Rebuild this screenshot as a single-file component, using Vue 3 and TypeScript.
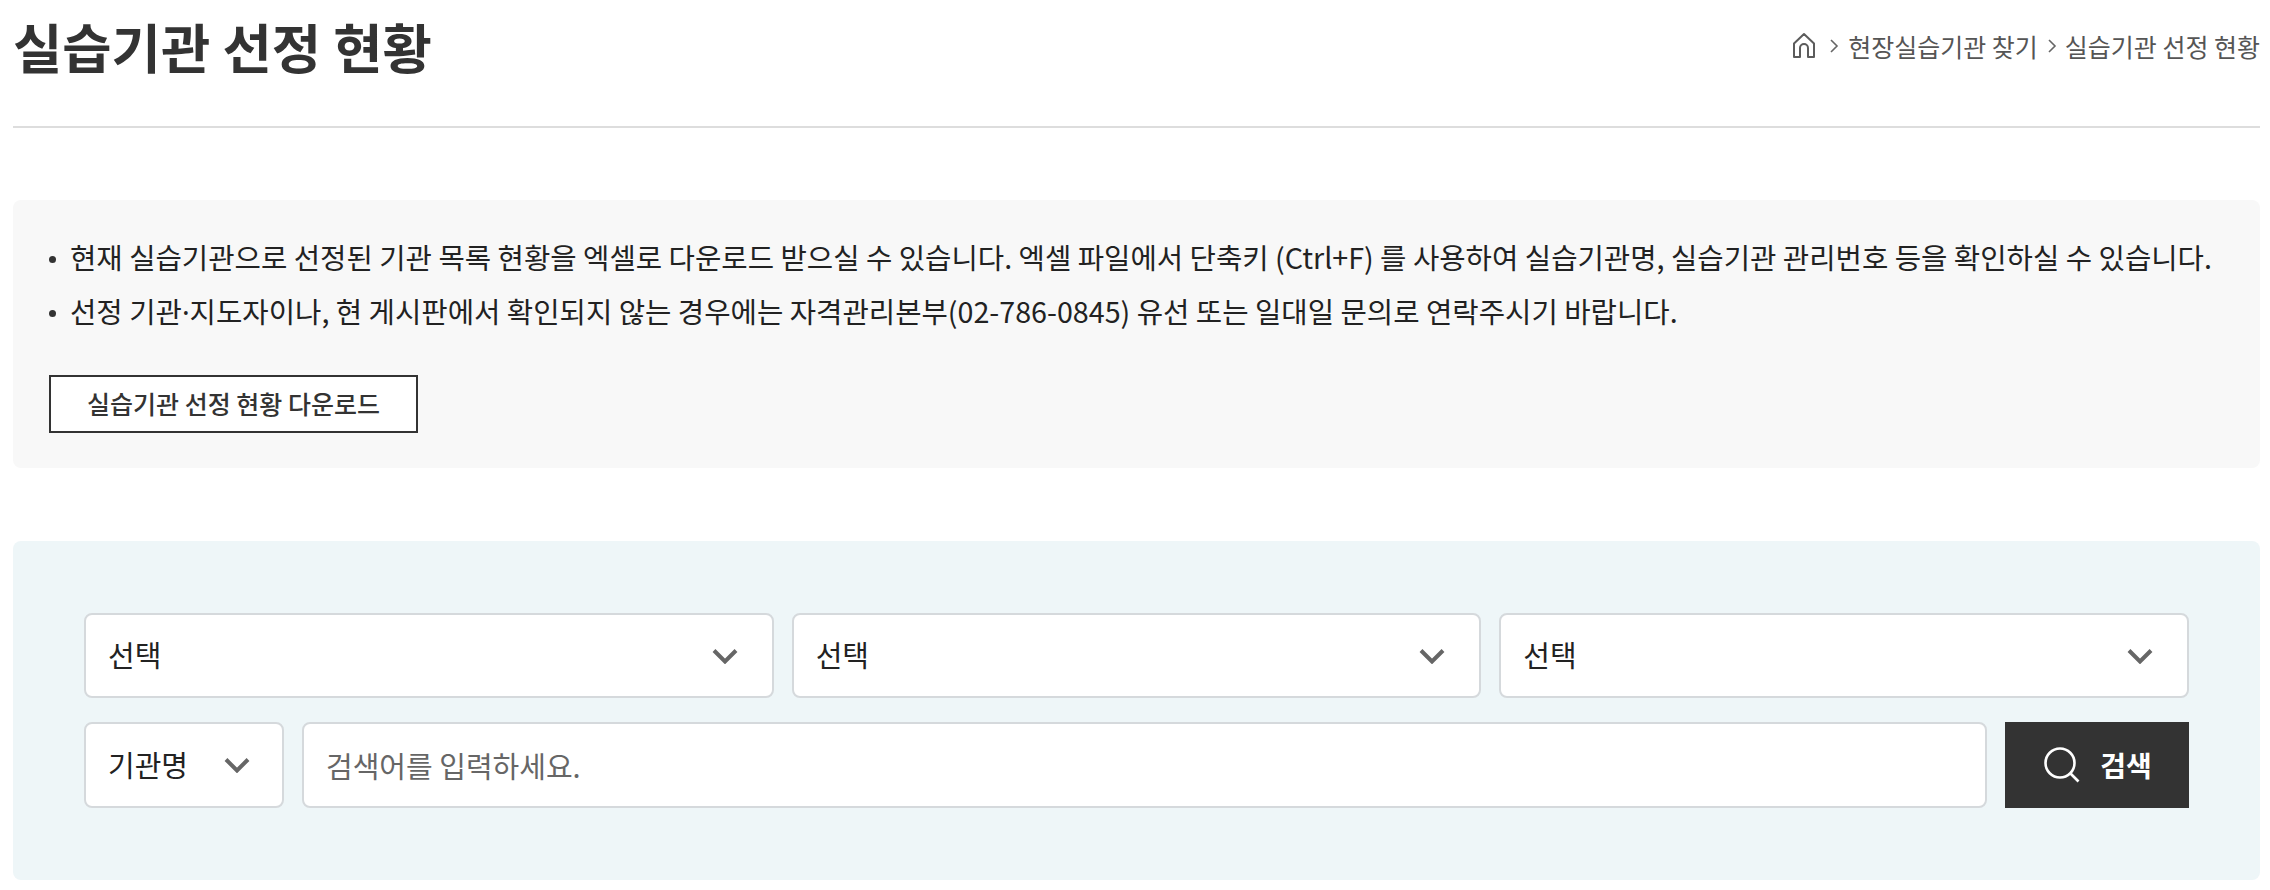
<script setup lang="ts">
const selects = ['선택', '선택', '선택']
</script>

<template>
  <div class="page">
    <header class="head">
      <h1>실습기관 선정 현황</h1>
      <nav class="crumbs">
        <svg class="home" width="24" height="27" viewBox="0 0 24 27" fill="none" stroke="#5c5c5c" stroke-width="2" stroke-linejoin="round">
          <path d="M2 11.500 12 2l10 9.500V25H16V16a4 4 0 0 0-8 0V25H2Z" />
        </svg>
        <svg class="sep first" width="10" height="16" viewBox="0 0 10 16" fill="none" stroke="#666" stroke-width="1.6"><path d="m2 2 6 6-6 6" /></svg>
        <span>현장실습기관 찾기</span>
        <svg class="sep" width="10" height="16" viewBox="0 0 10 16" fill="none" stroke="#666" stroke-width="1.6"><path d="m2 2 6 6-6 6" /></svg>
        <span>실습기관 선정 현황</span>
      </nav>
    </header>

    <section class="notice">
      <ul>
        <li>현재 실습기관으로 선정된 기관 목록 현황을 엑셀로 다운로드 받으실 수 있습니다. 엑셀 파일에서 단축키 (Ctrl+F) 를 사용하여 실습기관명, 실습기관 관리번호 등을 확인하실 수 있습니다.</li>
        <li>선정 기관<span class="dot">·</span>지도자이나, 현 게시판에서 확인되지 않는 경우에는 자격관리본부(02-786-0845) 유선 또는 일대일 문의로 연락주시기 바랍니다.</li>
      </ul>
      <button class="download"><span>실습기관 선정 현황 다운로드</span></button>
    </section>

    <section class="search">
      <div class="row selects">
        <div v-for="(label, i) in selects" :key="i" class="select">
          <span>{{ label }}</span>
          <svg width="26" height="16" viewBox="0 0 26 16" fill="none" stroke="#666" stroke-width="4"><path d="m2 2.500 11 11 11-11" /></svg>
        </div>
      </div>
      <div class="row lower">
        <div class="select kind">
          <span>기관명</span>
          <svg width="26" height="16" viewBox="0 0 26 16" fill="none" stroke="#666" stroke-width="4"><path d="m2 2.500 11 11 11-11" /></svg>
        </div>
        <input class="keyword" type="text" placeholder="검색어를 입력하세요." />
        <button class="submit">
          <svg width="38" height="38" viewBox="0 0 38 38" fill="none" stroke="#fff" stroke-width="2.600"><circle cx="17" cy="17" r="14.500" /><path d="m27.500 27.500 8 8" /></svg>
          <span>검색</span>
        </button>
      </div>
    </section>
  </div>
</template>

<style>
body {
  background: #fff;
}
</style>

<style scoped>
.page {
  padding: 0 10px 0 13px;
  font-family: "Noto Sans CJK KR", "Noto Sans", sans-serif;
  color: #333;
}

.head {
  display: flex;
  align-items: center;
  justify-content: space-between;
  height: 128px;
  padding-bottom: 35px;
  box-sizing: border-box;
  border-bottom: 2px solid #ddd;
}

h1 {
  margin: 2px 0 0;
  font-size: 53.6px;
  font-weight: 700;
  line-height: 1.2;
}

.crumbs {
  display: flex;
  align-items: center;
  font-size: 25px;
  color: #555;
}

.home {
  margin-right: 13px;
}

.sep {
  margin: 0 8px 0 9px;
}

.sep.first {
  margin: 0 9px 0 0;
}

.notice {
  margin-top: 72px;
  padding: 30px 36px 35px;
  background: #f8f8f8;
  border-radius: 8px;
}

ul {
  margin: 0;
  padding: 0;
  list-style: none;
}

li {
  position: relative;
  padding-left: 21px;
  font-size: 28.67px;
  line-height: 54px;
  color: #222;
}

li::before {
  content: '';
  position: absolute;
  left: 0;
  top: 26px;
  width: 7px;
  height: 7px;
  border-radius: 50%;
  background: #333;
}

.dot {
  font-family: "Noto Sans", sans-serif;
}

.download {
  display: block;
  width: 369px;
  height: 58px;
  margin-top: 36px;
  padding: 0 0 2px;
  border: 2px solid #333;
  background: #fff;
  font: 500 25px "Noto Sans CJK KR", sans-serif;
  color: #333;
}

.search {
  margin-top: 73px;
  padding: 72px 71px;
  background: #eef6f8;
  border-radius: 8px;
}

.row {
  display: flex;
  gap: 18px;
}

.selects {
  margin-bottom: 24px;
}

.selects .select {
  flex: 1;
}

.select {
  display: flex;
  align-items: center;
  justify-content: space-between;
  height: 85px;
  padding: 0 34px 0 22px;
  box-sizing: border-box;
  background: #fff;
  border: 2px solid #d5d9dc;
  border-radius: 8px;
  font-size: 29px;
  color: #222;
}

.select span {
  margin-bottom: 3px;
}

.lower > * {
  height: 86px;
}

.kind {
  flex: 0 0 200px;
  padding-right: 32px;
}

.keyword {
  flex: 1;
  min-width: 0;
  padding: 0 22px;
  box-sizing: border-box;
  background: #fff;
  border: 2px solid #d5d9dc;
  border-radius: 8px;
  outline: none;
  font: 400 29px "Noto Sans CJK KR", sans-serif;
}

.keyword::placeholder {
  color: #666;
  opacity: 1;
}

.submit {
  display: flex;
  align-items: center;
  justify-content: center;
  gap: 19px;
  flex: 0 0 184px;
  padding: 0 0 0 1px;
  border: 0;
  background: #333;
  color: #fff;
  font: 700 28px "Noto Sans CJK KR", sans-serif;
}
</style>
